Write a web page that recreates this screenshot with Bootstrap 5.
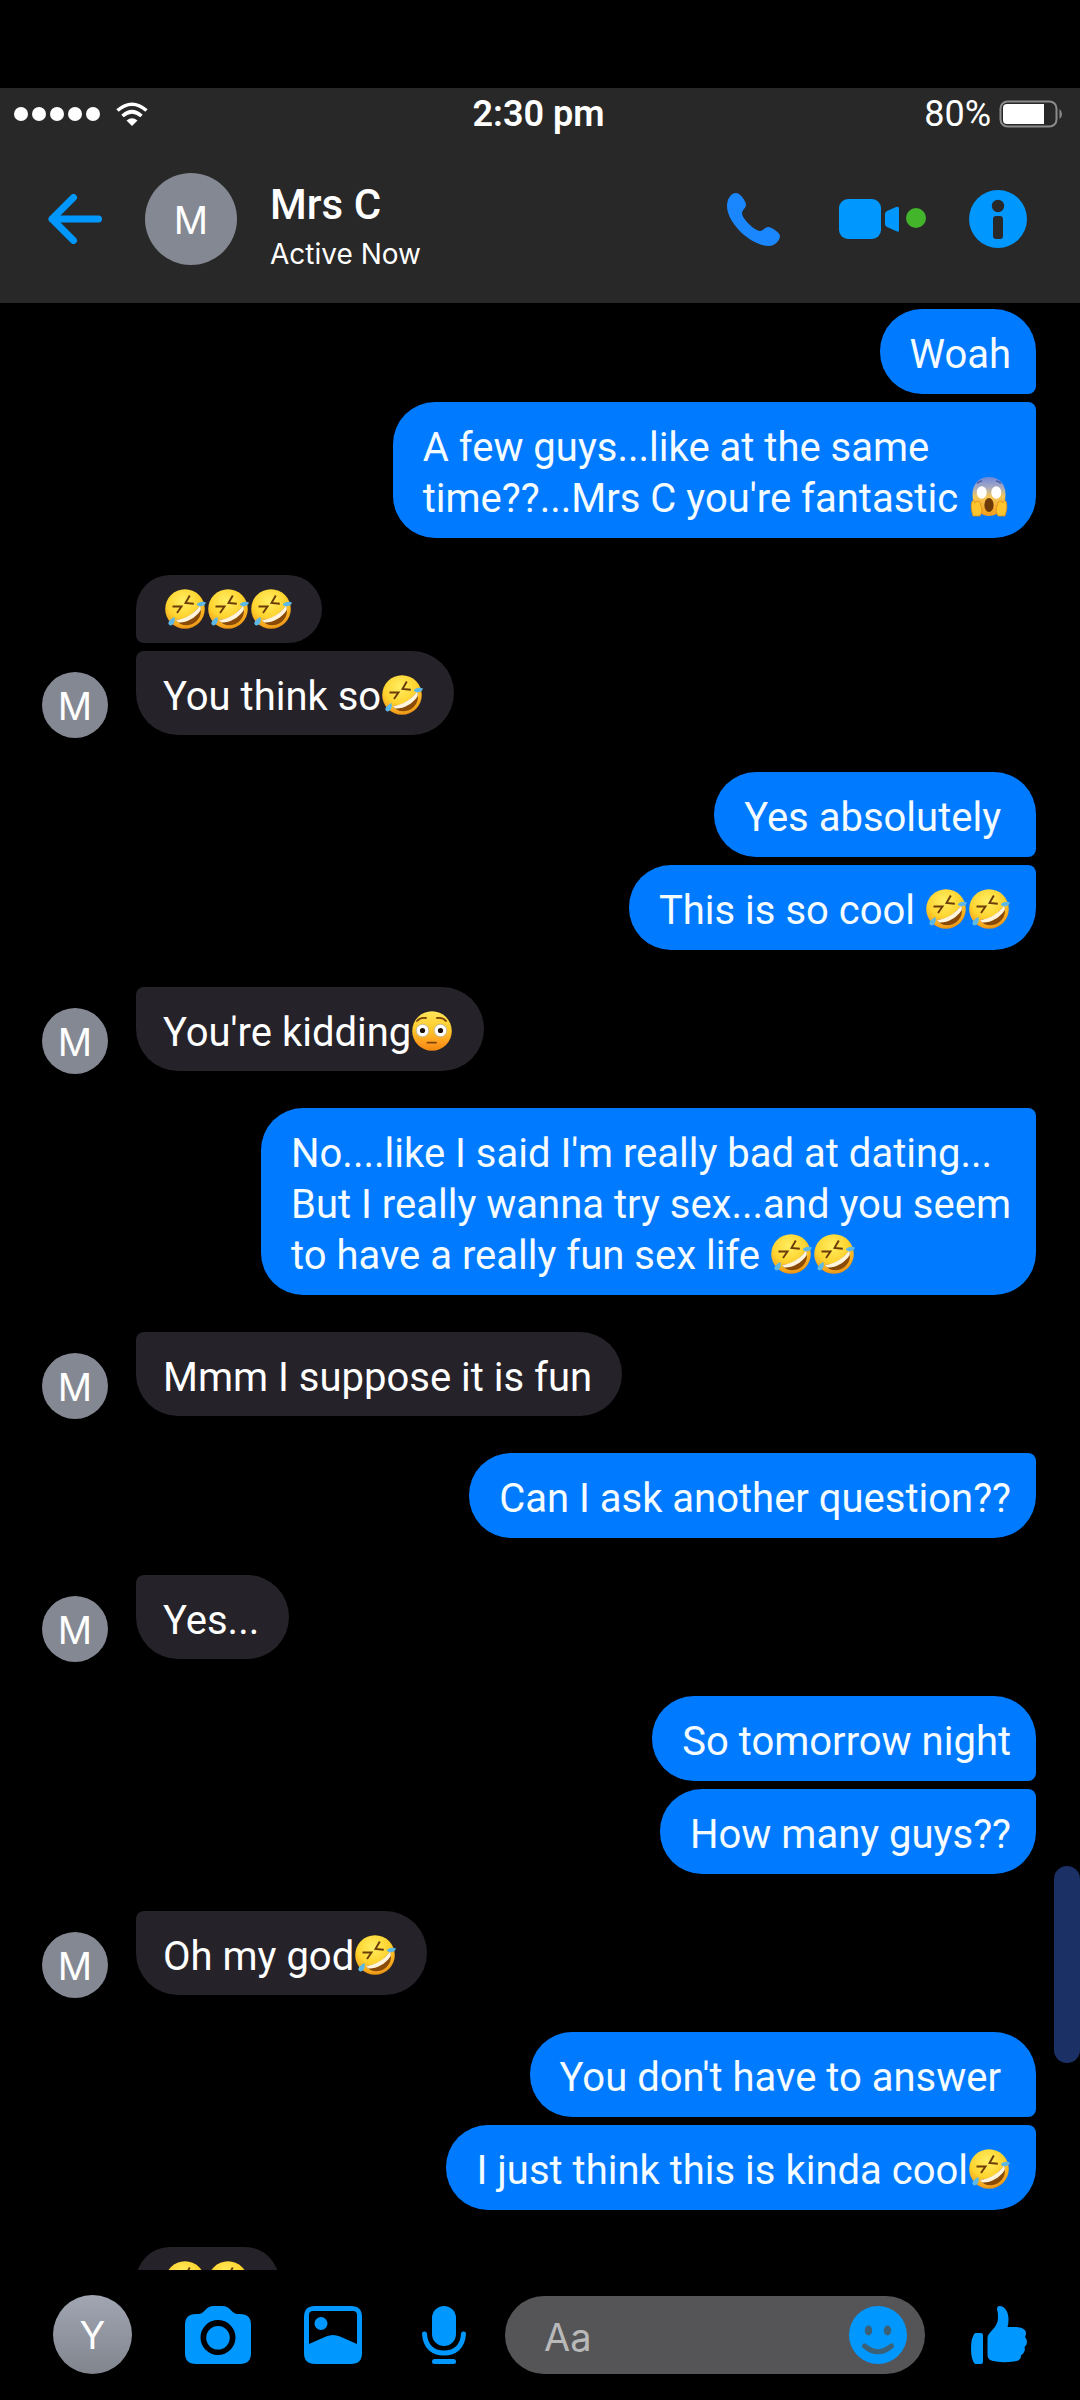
<!DOCTYPE html>
<html lang="en" data-bs-theme="dark">
<head>
<meta charset="utf-8">
<meta name="viewport" content="width=device-width, initial-scale=1">
<title>Mrs C</title>
<link href="https://cdn.jsdelivr.net/npm/bootstrap@5.3.0/dist/css/bootstrap.min.css" rel="stylesheet">
<style>
  :root { --accent: #0098ff; --sent: #007aff; --received: #252329; --avatar: #848892; }
  body { background: #000; color: #fff; font-family: Inter, Roboto, "Liberation Sans", sans-serif; }
  svg { display: block; }
  .chat-top { background: #282828; }
  .notch-space { height: 88px; background: #000; }
  .status-row { height: 52px; padding: 0 17px 0 14px; font-family: Roboto, sans-serif; font-size: 36px; line-height: 52px; }
  .status-row > div { flex: 1 1 0; }
  .signal-dot { width: 14px; height: 14px; border-radius: 50%; background: #fff; }
  .title-row { height: 163px; padding: 0 53px 5px 48px; }
  .icon-btn { padding: 0; border: 0; background: none; color: var(--accent); flex: none; }
  .video-btn { margin: 0 43px 0 59px; }
  .camera-btn { margin: 0 53px; }
  .mic-btn { margin-left: 60px; }
  .face { border-radius: 50%; background: var(--avatar); display: flex; align-items: center; justify-content: center; flex: none; padding-top: 2px; }
  .face-top { width: 92px; height: 92px; font-size: 38px; margin: 0 33px 0 43px; }
  .face-row { width: 66px; height: 66px; font-size: 38px; line-height: 64px; margin-bottom: -3px; }
  .face-me { width: 79px; height: 79px; font-size: 38px; background: linear-gradient(#a0a6b2, #81858e); }
  .contact { padding-top: 14px; }
  .contact-name { font-family: Roboto, sans-serif; font-size: 42px; line-height: 50px; font-weight: 500; }
  .contact-state { font-size: 28px; line-height: 36px; margin-top: 6px; }
  .thread { min-height: 0; padding: 6px 44px 0 42px; gap: 37px; }
  .turn { gap: 8px; }
  .bubble { font-family: Roboto, "Liberation Sans", sans-serif; font-size: 40px; line-height: 51px; flex: none; }
  .sent .bubble { background: var(--sent); color: #f4fcff; padding: 20px 25px 14px 30px; border-radius: 42px 8px 42px 42px; }
  .sent .bubble.lead-in { border-radius: 42px 42px 8px 42px; }
  .received .bubble { background: var(--received); padding: 20px 30px 13px 27px; border-radius: 8px 42px 42px 42px; }
  .received .bubble.emoji-only { display: flex; padding: 13px 29px 13px 28px; border-radius: 34px 34px 34px 8px; }
  .received { gap: 28px; }
  .received.no-face { padding-left: 94px; }
  .emo { display: inline-block; width: 43px; height: 42px; vertical-align: -6px; }
  .scroll-thumb { right: 0; top: 77.75%; width: 26px; height: 197px; border-radius: 13px; background: #1b3165; }
  .composer { height: 130px; padding: 0 53px 1px 53px; }
  .field-wrap { min-width: 0; height: 78px; border-radius: 39px; background: #555557; margin: 0 46px 0 39px; padding: 0 18px 0 39px; }
  .field-wrap input { background: none; border: 0; outline: 0; color: #fff; font-size: 38px; line-height: 46px; padding: 4px 0 0; width: 100%; min-width: 0; }
  .field-wrap input::placeholder { color: #b9b9ba; opacity: 1; }
</style>
<script src="https://cdn.jsdelivr.net/npm/bootstrap@5.3.0/dist/js/bootstrap.bundle.min.js"></script>
</head>
<body>
<svg width="0" height="0" class="position-absolute" aria-hidden="true">
  <defs>
    <radialGradient id="skin" cx=".45" cy=".3" r=".75"><stop offset="0" stop-color="#ffee62"/><stop offset=".55" stop-color="#ffd32e"/><stop offset=".85" stop-color="#f5a31c"/><stop offset="1" stop-color="#d98210"/></radialGradient>
    <linearGradient id="flush" x1="0" y1="0" x2="0" y2="1"><stop offset="0" stop-color="#ffe55a"/><stop offset=".45" stop-color="#ffcb2b"/><stop offset=".8" stop-color="#ff9c1e"/><stop offset="1" stop-color="#f0870f"/></linearGradient>
    <linearGradient id="fear" x1="0" y1="0" x2="0" y2="1"><stop offset="0" stop-color="#6f87d8"/><stop offset=".28" stop-color="#a9abc0"/><stop offset=".5" stop-color="#f5c75a"/><stop offset="1" stop-color="#f59c17"/></linearGradient>
    <symbol id="rofl" viewBox="-1 -1 43 42">
      <circle cx="20" cy="20" r="19.8" fill="url(#skin)"/>
      <path d="M7.5 17.5 16.500 17.500 12 24M24.800 6.500 20.500 14 28.800 14.800" fill="none" stroke="#6b3c08" stroke-width="1.900" stroke-linejoin="miter"/>
      <path d="M11 31C20 30.500 29 25 35 16.500C38 24 34 33 26 35.500C20 37.500 14 35.500 11 31Z" fill="#8a4a08"/>
      <path d="M11 31C20 30 29 25 35 16.500C36 18.500 36 20 35.500 21.500C30 29.500 21 34 13.500 33.500C12.500 32.800 11.500 32 11 31Z" fill="#fff5dc"/>
      <path d="M32 15C34.500 12.500 38 12 41 13.500C40.500 16.500 36.500 18 34 17C32.500 16.500 31.500 16 32 15ZM9.500 28C10.500 32 9 36 5.500 36.500C2 35.500 2.500 31.500 9.500 28Z" fill="#5cb8e6"/>
    </symbol>
    <symbol id="flushed" viewBox="-1 -1 43 42">
      <circle cx="20" cy="20" r="19.8" fill="url(#flush)"/>
      <g fill="#fff" stroke="#c9b98a" stroke-width="1"><circle cx="10.500" cy="19.500" r="6.300"/><circle cx="28.500" cy="19.500" r="6.300"/></g>
      <circle cx="10.500" cy="19.500" r="2.600" fill="#1c120a"/><circle cx="28.500" cy="19.500" r="2.600" fill="#1c120a"/>
      <path d="M5 10Q8 6 14 7M25 7Q31 6 34 10M15.500 31.700H24" fill="none" stroke="#7a4308" stroke-width="1.800" stroke-linecap="round"/>
    </symbol>
    <symbol id="scream" viewBox="-1 -1 43 42">
      <path d="M20 0C30 0 36.500 7 36.500 17C36.500 31 29 39 20 39S3.500 31 3.500 17C3.500 7 10 0 20 0Z" fill="url(#fear)"/>
      <ellipse cx="12.700" cy="15.500" rx="5" ry="6.200" fill="#fff"/><ellipse cx="27.300" cy="15.500" rx="5" ry="6.200" fill="#fff"/>
      <ellipse cx="20" cy="28" rx="4.600" ry="7" fill="#6e3a08"/>
      <path d="M8.500 6Q10 4.500 12.500 4M27.500 4Q30 4.500 31.500 6" fill="none" stroke="#4c5da5" stroke-width="1.400" stroke-linecap="round"/>
      <path d="M4 39C2 33 1.500 28 3 24.500C4 22.500 6 23.500 6 26C8 22.500 12 24.500 11.500 28C13.500 30 13 36 11 39Z M36 39C38 33 38.500 28 37 24.500C36 22.500 34 23.500 34 26C32 22.500 28 24.500 28.500 28C26.500 30 27 36 29 39Z" fill="#ffc52e" stroke="#dd8d14" stroke-width=".8"/>
    </symbol>
  </defs>
</svg>

<div class="vh-100 d-flex flex-column overflow-hidden position-relative">
  <header class="chat-top flex-shrink-0">
    <div class="notch-space"></div>
    <div class="status-row d-flex align-items-center">
      <div class="d-flex align-items-center">
        <span class="d-flex gap-1"><i class="signal-dot"></i><i class="signal-dot"></i><i class="signal-dot"></i><i class="signal-dot"></i><i class="signal-dot"></i></span>
        <svg class="ms-3" width="32" height="25" viewBox="0 0 32 25" aria-label="Wi-Fi"><g fill="none" stroke="#fff" stroke-width="3.600"><path d="M1.500 8.500Q16 -4 30.500 8.500"/><path d="M6.500 14Q16 5.500 25.500 14"/></g><path d="M10.500 18.500Q16 14 21.500 18.500L16 24Z" fill="#fff"/></svg>
      </div>
      <div class="text-center fw-semibold text-nowrap">2:30 pm</div>
      <div class="d-flex align-items-center justify-content-end gap-2">
        <span>80%</span>
        <svg width="64" height="28" viewBox="0 0 64 28" aria-label="Battery"><rect x="1.500" y="1.500" width="56" height="25" rx="7" fill="none" stroke="#8b8b8b" stroke-width="2"/><path d="M8 4H45V24H8Q4 24 4 20V8Q4 4 8 4Z" fill="#fff"/><path d="M60.500 9Q63 11 63 14T60.500 19Z" fill="#8b8b8b"/></svg>
      </div>
    </div>
    <div class="title-row d-flex align-items-center">
      <button type="button" class="icon-btn" aria-label="Back"><svg width="54" height="50" viewBox="0 0 54 50"><path d="M25.500 3.500 4 25 25.500 46.500M4 25H50.500" fill="none" stroke="currentColor" stroke-width="7" stroke-linecap="round" stroke-linejoin="round"/></svg></button>
      <div class="face face-top">M</div>
      <div class="contact me-auto">
        <h1 class="contact-name mb-0">Mrs C</h1>
        <div class="contact-state">Active Now</div>
      </div>
      <button type="button" class="icon-btn" aria-label="Call"><svg width="53" height="53" viewBox="0 0 53 53"><path fill="#1a87ff" d="M0 13C0 6 4 0 9 0C13 0 19 8 19 12C19 15 15 17 15 20C15 26 28 38 33 38C36 38 38 34 41 34C45 34 53 40 53 43C53 48 47 53 42 53C24 53 0 30 0 13Z"/></svg></button>
      <button type="button" class="icon-btn video-btn" aria-label="Video call"><svg width="87" height="40" viewBox="0 0 87 40"><rect width="42" height="40" rx="9" fill="currentColor"/><path d="M46 15Q46 13 48 12L57 8Q60 7 60 10V31Q60 34 57 32L48 28Q46 27 46 25Z" fill="currentColor"/><circle cx="77" cy="19" r="10" fill="#43b52b"/></svg></button>
      <button type="button" class="icon-btn" aria-label="Information"><svg width="58" height="58" viewBox="0 0 58 58"><circle cx="29" cy="29" r="29" fill="currentColor"/><circle cx="29" cy="16" r="6.200" fill="#282828"/><rect x="24" y="26" width="10" height="23" rx="3" fill="#282828"/></svg></button>
    </div>
  </header>

  <main class="thread d-flex flex-column flex-fill overflow-hidden">
    <div class="turn sent d-flex flex-column align-items-end">
      <div class="bubble lead-in">Woah</div>
      <div class="bubble">A few guys...like at the same<br>time??...Mrs C you're fantastic <svg class="emo" role="img" aria-label="😱"><use href="#scream"/></svg></div>
    </div>
    <div class="received d-flex align-items-end">
      <div class="face face-row">M</div>
      <div class="turn d-flex flex-column align-items-start">
        <div class="bubble emoji-only"><svg class="emo" role="img" aria-label="🤣"><use href="#rofl"/></svg><svg class="emo" role="img" aria-label="🤣"><use href="#rofl"/></svg><svg class="emo" role="img" aria-label="🤣"><use href="#rofl"/></svg></div>
        <div class="bubble">You think so<svg class="emo" role="img" aria-label="🤣"><use href="#rofl"/></svg></div>
      </div>
    </div>
    <div class="turn sent d-flex flex-column align-items-end">
      <div class="bubble lead-in">Yes absolutely&nbsp;</div>
      <div class="bubble">This is so cool <svg class="emo" role="img" aria-label="🤣"><use href="#rofl"/></svg><svg class="emo" role="img" aria-label="🤣"><use href="#rofl"/></svg></div>
    </div>
    <div class="received d-flex align-items-end">
      <div class="face face-row">M</div>
      <div class="bubble">You're kidding<svg class="emo" role="img" aria-label="😳"><use href="#flushed"/></svg></div>
    </div>
    <div class="turn sent d-flex flex-column align-items-end">
      <div class="bubble">No....like I said I'm really bad at dating...<br>But I really wanna try sex...and you seem<br>to have a really fun sex life <svg class="emo" role="img" aria-label="🤣"><use href="#rofl"/></svg><svg class="emo" role="img" aria-label="🤣"><use href="#rofl"/></svg></div>
    </div>
    <div class="received d-flex align-items-end">
      <div class="face face-row">M</div>
      <div class="bubble">Mmm I suppose it is fun</div>
    </div>
    <div class="turn sent d-flex flex-column align-items-end">
      <div class="bubble">Can I ask another question??</div>
    </div>
    <div class="received d-flex align-items-end">
      <div class="face face-row">M</div>
      <div class="bubble">Yes...</div>
    </div>
    <div class="turn sent d-flex flex-column align-items-end">
      <div class="bubble lead-in">So tomorrow night</div>
      <div class="bubble">How many guys??</div>
    </div>
    <div class="received d-flex align-items-end">
      <div class="face face-row">M</div>
      <div class="bubble">Oh my god<svg class="emo" role="img" aria-label="🤣"><use href="#rofl"/></svg></div>
    </div>
    <div class="turn sent d-flex flex-column align-items-end">
      <div class="bubble lead-in">You don't have to answer&nbsp;</div>
      <div class="bubble">I just think this is kinda cool<svg class="emo" role="img" aria-label="🤣"><use href="#rofl"/></svg></div>
    </div>
    <div class="received no-face d-flex align-items-end">
      <div class="bubble emoji-only"><svg class="emo" role="img" aria-label="🤣"><use href="#rofl"/></svg><svg class="emo" role="img" aria-label="🤣"><use href="#rofl"/></svg></div>
    </div>
  </main>

  <footer class="composer d-flex align-items-center flex-shrink-0">
    <div class="face face-me">Y</div>
    <button type="button" class="icon-btn camera-btn" aria-label="Camera"><svg width="66" height="58" viewBox="0 0 66 58"><path fill="currentColor" fill-rule="evenodd" d="M11 8H13C20 8 20 0 29 0H37C46 0 46 8 53 8H55Q66 8 66 19V47Q66 58 55 58H11Q0 58 0 47V19Q0 8 11 8ZM33 14A17.500 17.500 0 1 0 33 49A17.500 17.500 0 1 0 33 14ZM33 20A11.800 11.800 0 1 1 33 43.600A11.800 11.800 0 1 1 33 20Z"/></svg></button>
    <button type="button" class="icon-btn" aria-label="Photos"><svg width="58" height="58" viewBox="0 0 58 58"><path fill="currentColor" fill-rule="evenodd" d="M11 0H47Q58 0 58 11V47Q58 58 47 58H11Q0 58 0 47V11Q0 0 11 0ZM9 5Q5 5 5 9V38L22 30.500Q29 27.500 36 30.500L53 38V9Q53 5 49 5Z"/><circle cx="17" cy="17.500" r="6.500" fill="currentColor"/></svg></button>
    <button type="button" class="icon-btn mic-btn" aria-label="Voice message"><svg width="44" height="58" viewBox="0 0 44 58"><rect x="10" width="24" height="40" rx="12" fill="currentColor"/><path d="M2.500 28C3.500 41 11 47 22 47S40.500 41 41.500 28" fill="none" stroke="currentColor" stroke-width="5" stroke-linecap="round"/><rect x="10" y="53" width="24" height="5" rx="2.500" fill="currentColor"/></svg></button>
    <div class="field-wrap d-flex align-items-center flex-fill">
      <input type="text" placeholder="Aa" aria-label="Message">
      <button type="button" class="icon-btn" aria-label="Emoji"><svg width="58" height="58" viewBox="0 0 58 58"><circle cx="29" cy="29" r="29" fill="currentColor"/><g fill="#3c6076"><ellipse cx="19.500" cy="24.500" rx="3.700" ry="5"/><ellipse cx="38.500" cy="24.500" rx="3.700" ry="5"/></g><path d="M15.500 40Q29 51.500 42.500 40" fill="none" stroke="#3c6076" stroke-width="5" stroke-linecap="round"/></svg></button>
    </div>
    <button type="button" class="icon-btn" aria-label="Like"><svg width="56" height="58" viewBox="0 0 56 58"><path fill="currentColor" d="M4 27H10Q12 27 12 29V56Q12 58 10 58H4Q0 54 0 42.500T4 27ZM26 3Q26 0 28.500 0C34 0 37.500 6 37.500 13Q37.500 18 36.500 21H44C50 21 55 23 55 27Q55 29 54 31Q56 33 56 36Q56 39 53.500 41Q55 46 50 49.500Q50 55 43 55.500Q30 57 22 55Q16.500 54 16.500 49V32C16.500 26 27 22 27 12Q27 6 26 3Z"/></svg></button>
  </footer>

  <div class="scroll-thumb position-absolute"></div>
</div>
</body>
</html>
